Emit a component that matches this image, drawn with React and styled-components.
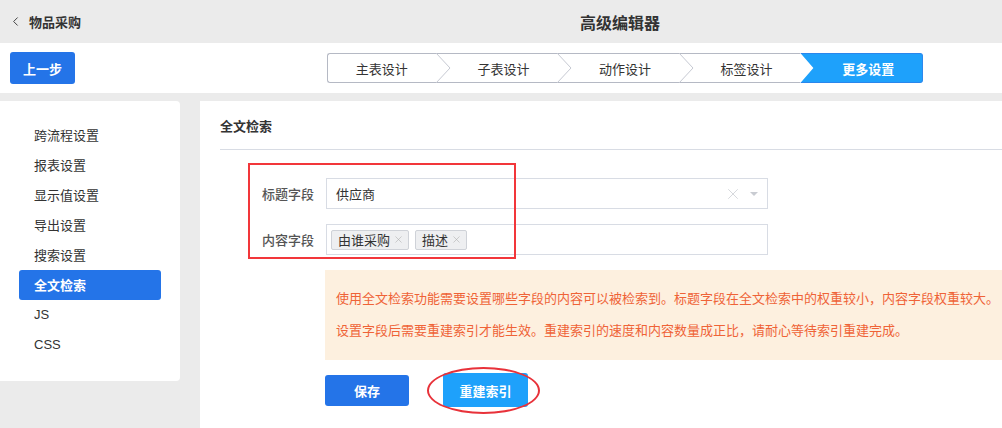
import React from "react";
import styled, { createGlobalStyle } from "styled-components";
import { ChevronLeft, X } from "lucide-react";

// global
const GlobalStyle = createGlobalStyle`
  html, body {
    margin: 0;
    padding: 0;
    overflow: hidden;
    background: #ebebeb;
  }
  body {
    font-family: "Noto Sans CJK SC", "Liberation Sans", sans-serif;
    font-size: 13px;
    color: #333;
  }
  * { box-sizing: border-box; }
`;

// styled components
const Page = styled.div`
  width: 1246px;
  height: 428px;
  background: #ebebeb;
`;

const Header = styled.header`
  display: grid;
  grid-template-columns: 1fr auto 1fr;
  align-items: center;
  height: 43px;
  padding: 0 14px 0 8px;
`;

const Back = styled.div`
  display: flex;
  align-items: center;
  gap: 6px;
  font-weight: 700;
  font-size: 13px;
  color: #333;
`;

const PageTitle = styled.h1`
  margin: 0;
  font-size: 16px;
  font-weight: 700;
  color: #333;
`;

const Toolbar = styled.div`
  display: grid;
  grid-template-columns: 1fr auto 1fr;
  align-items: center;
  height: 50px;
  padding: 0 10px;
  background: #fff;
`;

const Button = styled.button`
  height: ${(p) => p.$h || 32}px;
  width: ${(p) => p.$w}px;
  border: none;
  border-radius: 3px;
  background: ${(p) => (p.$light ? "#1ea1fb" : "#2474e8")};
  color: #fff;
  font-family: inherit;
  font-size: 13px;
  font-weight: 700;
  cursor: pointer;
  justify-self: start;
`;

const StepBar = styled.div`
  display: flex;
  width: 596px;
  height: 30px;
  margin-left: 4px;
`;

const Step = styled.div`
  position: relative;
  flex: 1;
  display: flex;
  align-items: center;
  justify-content: center;
  padding-left: ${(p) => (p.$first ? 0 : 14)}px;
  border-top: 1px solid ${(p) => (p.$active ? "#2a86ec" : "#b5b9c4")};
  border-bottom: 1px solid ${(p) => (p.$active ? "#2a86ec" : "#b5b9c4")};
  border-left: ${(p) => (p.$first ? "1px solid #b5b9c4" : "none")};
  border-right: ${(p) => (p.$last ? "1px solid #2a86ec" : "none")};
  border-radius: ${(p) => (p.$first ? "3px 0 0 3px" : p.$last ? "0 3px 3px 0" : "0")};
  background: ${(p) => (p.$active ? "#1ea1fb" : "#fff")};
  clip-path: ${(p) =>
    p.$active ? "polygon(0 0, 100% 0, 100% 100%, 0 100%, 13px 50%)" : "none"};
  color: ${(p) => (p.$active ? "#fff" : "#333")};
  font-weight: ${(p) => (p.$active ? 700 : 400)};
  font-size: 13px;
`;

const Chevron = styled.svg`
  position: absolute;
  left: 0;
  top: -1px;
`;

const Body = styled.div`
  display: flex;
  gap: 20px;
  padding-top: 8px;
  align-items: flex-start;
`;

const Sidebar = styled.nav`
  width: 180px;
  padding: 19px 19px 21px;
  background: #fff;
  border-radius: 0 4px 4px 0;
`;

const NavItem = styled.div`
  height: 30px;
  line-height: 30px;
  padding-left: 15px;
  border-radius: 3px;
  font-size: 13px;
  background: ${(p) => (p.$active ? "#2474e8" : "transparent")};
  color: ${(p) => (p.$active ? "#fff" : "#333")};
  font-weight: ${(p) => (p.$active ? 700 : 400)};
  font-family: ${(p) =>
    p.$latin ? '"Liberation Sans", sans-serif' : "inherit"};
`;

const Main = styled.main`
  flex: 1;
  height: 340px;
  background: #fff;
  padding-left: 20px;
`;

const SectionTitle = styled.h2`
  margin: 0;
  height: 49px;
  line-height: 50px;
  font-size: 13px;
  font-weight: 700;
  color: #333;
  border-bottom: 1px solid #d8dce4;
`;

const Form = styled.div`
  position: relative;
  display: flex;
  flex-direction: column;
  gap: 15px;
  padding: 28px 0 0 42px;
`;

const Marker = styled.div`
  position: absolute;
  left: 28px;
  top: 13px;
  width: 268px;
  height: 96px;
  border: 2px solid #f2363a;
`;

const Row = styled.div`
  display: flex;
  align-items: center;
`;

const Label = styled.label`
  width: 64px;
  font-size: 13px;
  font-weight: 500;
  color: #555;
`;

const Select = styled.div`
  display: flex;
  align-items: center;
  gap: 6px;
  width: 442px;
  height: 31px;
  padding: 0 4px 0 ${(p) => (p.$tags ? 4 : 9)}px;
  border: 1px solid #d8dce4;
  font-size: 13px;
  color: #333;
`;

const Spacer = styled.div`
  flex: 1;
`;

const Caret = styled.span`
  width: 0;
  height: 0;
  margin: 0 5px 0 2px;
  border-left: 4px solid transparent;
  border-right: 4px solid transparent;
  border-top: 4px solid #c9ccd2;
`;

const Tag = styled.span`
  display: inline-flex;
  align-items: center;
  gap: 3px;
  height: 20px;
  padding: 0 4px 0 6px;
  background: #eeeff1;
  border: 1px solid #cfd2d8;
  border-radius: 2px;
  font-size: 13px;
  color: #333;
`;

const Notice = styled.div`
  margin: 15px 0 0 105px;
  padding: 12px 11px 14px;
  background: #fdf0df;
  color: #ef6337;
  font-size: 13px;
  line-height: 32px;
  white-space: nowrap;
`;

const Actions = styled.div`
  position: relative;
  display: flex;
  align-items: center;
  gap: 34px;
  margin: 12px 0 0 105px;
  height: 36px;
`;

const Ring = styled.div`
  position: absolute;
  left: 102px;
  top: -5px;
  width: 113px;
  height: 47px;
  border: 2px solid #e8323a;
  border-radius: 50%;
`;

const steps = ["主表设计", "子表设计", "动作设计", "标签设计", "更多设置"];
const menu = ["跨流程设置", "报表设置", "显示值设置", "导出设置", "搜索设置", "全文检索", "JS", "CSS"];

// 'App' COMPONENT
export default function App() {
  return (
    <Page>
      <GlobalStyle />

      <Header>
        <Back>
          <ChevronLeft size={15} strokeWidth={1.6} color="#444" />
          物品采购
        </Back>
        <PageTitle>高级编辑器</PageTitle>
        <div />
      </Header>

      <Toolbar>
        <Button $w={65}>上一步</Button>
        <StepBar>
          {steps.map((s, i) => (
            <Step
              key={s}
              $first={i === 0}
              $last={i === steps.length - 1}
              $active={i === steps.length - 1}
            >
              {i > 0 && i < steps.length - 1 && (
                <Chevron width="16" height="30" viewBox="0 0 16 30">
                  <polyline points="0,0 14,15 0,30" fill="none" stroke="#c6c9d2" strokeWidth="1" />
                </Chevron>
              )}
              {s}
            </Step>
          ))}
        </StepBar>
        <div />
      </Toolbar>

      <Body>
        <Sidebar>
          {menu.map((m) => (
            <NavItem key={m} $active={m === "全文检索"} $latin={m === "JS" || m === "CSS"}>
              {m}
            </NavItem>
          ))}
        </Sidebar>

        <Main>
          <SectionTitle>全文检索</SectionTitle>

          <Form>
            <Marker />
            <Row>
              <Label>标题字段</Label>
              <Select>
                供应商
                <Spacer />
                <X size={18} strokeWidth={1} color="#c9ccd2" />
                <Caret />
              </Select>
            </Row>
            <Row>
              <Label>内容字段</Label>
              <Select $tags>
                <Tag>
                  由谁采购 <X size={11} strokeWidth={1.2} color="#aaa" />
                </Tag>
                <Tag>
                  描述 <X size={11} strokeWidth={1.2} color="#aaa" />
                </Tag>
              </Select>
            </Row>
          </Form>

          <Notice>
            <div>使用全文检索功能需要设置哪些字段的内容可以被检索到。标题字段在全文检索中的权重较小，内容字段权重较大。</div>
            <div>设置字段后需要重建索引才能生效。重建索引的速度和内容数量成正比，请耐心等待索引重建完成。</div>
          </Notice>

          <Actions>
            <Button $w={84} $h={31}>保存</Button>
            <Button $w={85} $h={34} $light>重建索引</Button>
            <Ring />
          </Actions>
        </Main>
      </Body>
    </Page>
  );
}
